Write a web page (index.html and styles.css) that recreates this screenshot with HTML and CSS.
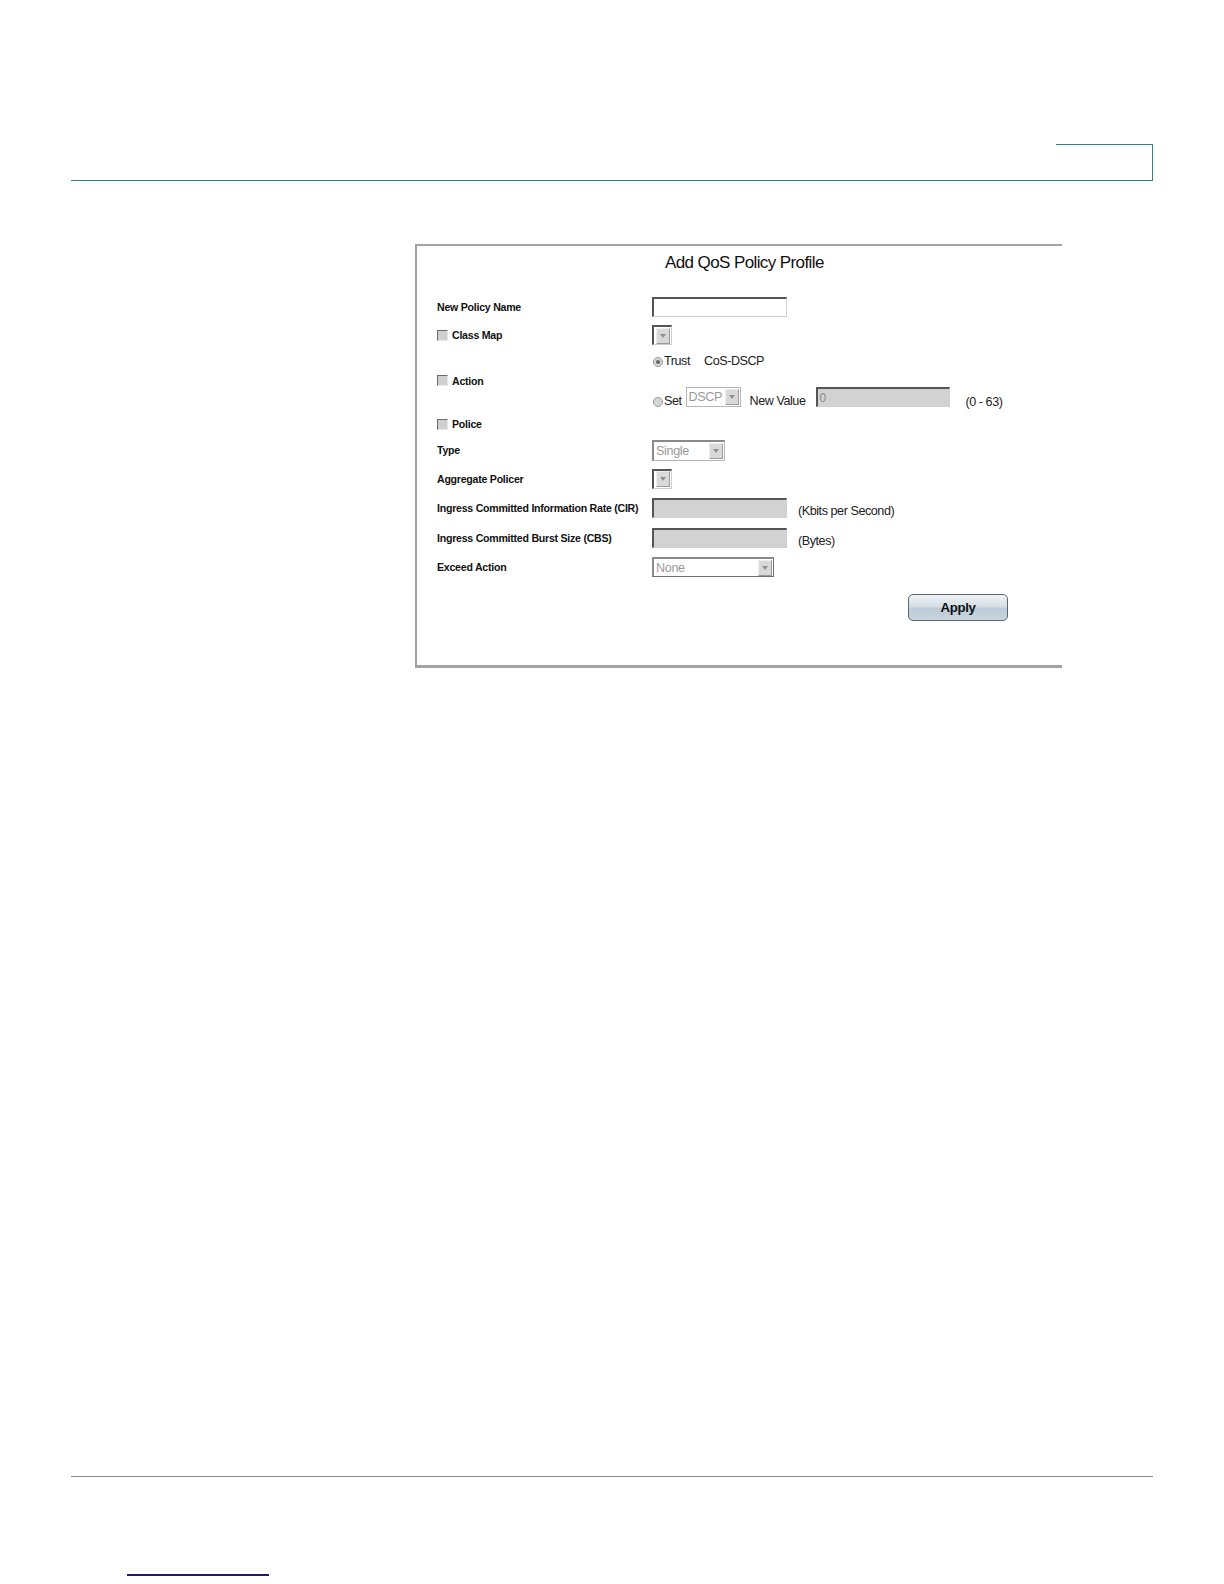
FILE: index.html
```html
<!DOCTYPE html>
<html>
<head>
<meta charset="utf-8">
<title>Add QoS Policy Profile</title>
<link rel="stylesheet" href="styles.css">
</head>
<body>
<div class="page">
  <div class="header"><div class="tab"></div></div>
  <div class="content">
    <div class="panel">
      <div class="title">Add QoS Policy Profile</div>
      <div class="form">
        <div class="row h28">
          <div class="label">New Policy Name</div>
          <div class="value"><span class="field white w135"></span></div>
        </div>
        <div class="row h28">
          <div class="label"><span class="check"></span>Class Map</div>
          <div class="value"><span class="select w20"><span class="btn"><span class="tri"></span></span></span></div>
        </div>
        <div class="row action">
          <div class="label"><span class="check"></span>Action</div>
          <div class="value stack">
            <div class="line trust"><span class="radio on"></span><span class="txt">Trust</span><span class="txt cos">CoS-DSCP</span></div>
            <div class="line set"><span class="radio"></span><span class="txt low">Set</span>
              <span class="select dis w55"><span class="seltext">DSCP</span><span class="btn"><span class="tri"></span></span></span>
              <span class="txt nv low">New Value</span>
              <span class="field gray w134"><span class="fieldtext">0</span></span>
              <span class="txt range">(0 - 63)</span>
            </div>
          </div>
        </div>
        <div class="row h24">
          <div class="label"><span class="check"></span>Police</div>
          <div class="value"></div>
        </div>
        <div class="row h28">
          <div class="label">Type</div>
          <div class="value"><span class="select dis w73 h21"><span class="seltext">Single</span><span class="btn"><span class="tri"></span></span></span></div>
        </div>
        <div class="row h29">
          <div class="label">Aggregate Policer</div>
          <div class="value"><span class="select w20"><span class="btn"><span class="tri"></span></span></span></div>
        </div>
        <div class="row h29">
          <div class="label">Ingress Committed Information Rate (CIR)</div>
          <div class="value"><span class="field gray w135"></span><span class="txt unit">(Kbits per Second)</span></div>
        </div>
        <div class="row h32">
          <div class="label">Ingress Committed Burst Size (CBS)</div>
          <div class="value"><span class="field gray w135"></span><span class="txt unit">(Bytes)</span></div>
        </div>
        <div class="row h26">
          <div class="label">Exceed Action</div>
          <div class="value"><span class="select dis w122 dark"><span class="seltext">None</span><span class="btn"><span class="tri"></span></span></span></div>
        </div>
      </div>
      <div class="actions"><button class="apply" type="button">Apply</button></div>
    </div>
  </div>
  <div class="footer"><span class="link"></span></div>
</div>
</body>
</html>
```

FILE: styles.css
```css
html, body {
  margin: 0;
  padding: 0;
  background: #ffffff;
  overflow: hidden;
}
.page {
  width: 1224px;
  height: 1584px;
  overflow: hidden;
  font-family: "Liberation Sans", Arial, sans-serif;
  color: #111;
}
.header {
  margin: 0 71px 0 71px;
  padding-top: 144px;
  border-bottom: 1px solid #3b7b84;
  display: flex;
  justify-content: flex-end;
}
.tab {
  width: 96px;
  height: 35px;
  border-top: 1px solid #3b7b84;
  border-right: 1px solid #3b7b84;
}
.content {
  height: 1295px;
  padding-top: 63px;
  box-sizing: border-box;
}
.panel {
  margin-left: 415px;
  width: 647px;
  height: 424px;
  box-sizing: border-box;
  border-left: 2px solid #a3a3a3;
  border-top: 2px solid #a3a3a3;
  border-bottom: 3px solid #a3a3a3;
}
.title {
  height: 34px;
  line-height: 34px;
  font-size: 17px;
  letter-spacing: -0.6px;
  padding-left: 248px;
  margin-bottom: 13px;
  color: #111;
}
.form {
  padding-left: 20px;
}
.row {
  display: grid;
  grid-template-columns: 215px 1fr;
  align-items: center;
}
.h24 { height: 24px; }
.h26 { height: 26px; }
.h28 { height: 28px; }
.h29 { height: 29px; }
.h32 { height: 32px; }
.action { height: 63px; }
.label {
  font-size: 10.6px;
  font-weight: bold;
  letter-spacing: -0.25px;
  display: flex;
  align-items: center;
  color: #111;
}
.value {
  display: flex;
  align-items: center;
}
.stack {
  flex-direction: column;
  align-items: flex-start;
  height: 63px;
}
.line {
  display: flex;
  align-items: center;
}
.trust { height: 23px; }
.set { height: 20px; margin-top: 15px; }
.txt {
  font-size: 12.6px;
  letter-spacing: -0.45px;
  color: #222;
}
.low { margin-top: 7px; }
.cos { margin-left: 14px; }
.nv { margin-left: 9px; margin-right: 11px; }
.range { margin-left: 15px; margin-top: 10px; }
.unit { margin-left: 11px; margin-top: 6px; }
.check {
  width: 9px;
  height: 9px;
  background: #cfcfcf;
  border-top: 1px solid #6a6a6a;
  border-left: 1px solid #6a6a6a;
  border-right: 1px solid #e6e6e6;
  border-bottom: 1px solid #e6e6e6;
  margin-right: 4px;
  flex: none;
}
.radio {
  width: 8px;
  height: 8px;
  border-radius: 50%;
  background: #d6d6d6;
  border: 1px solid #9a9a9a;
  margin-left: 1px;
  margin-right: 1px;
  margin-top: 3px;
  position: relative;
  flex: none;
}
.set .radio { margin-top: 9px; }
.radio.on::after {
  content: "";
  position: absolute;
  left: 2px;
  top: 2px;
  width: 4px;
  height: 4px;
  border-radius: 50%;
  background: #666;
}
.field {
  display: inline-flex;
  align-items: center;
  height: 20px;
  box-sizing: border-box;
  border-top: 2px solid #555;
  border-left: 2px solid #555;
  border-right: 1px solid #cfcfcf;
  border-bottom: 1px solid #cfcfcf;
  flex: none;
}
.field.white { background: #fff; }
.field.gray { background: #d2d2d2; }
.w135 { width: 135px; }
.w134 { width: 134px; }
.fieldtext {
  font-size: 12px;
  color: #8a8a8a;
  padding-left: 1px;
}
.select {
  display: inline-flex;
  align-items: center;
  justify-content: space-between;
  height: 20px;
  box-sizing: border-box;
  background: #fff;
  border-top: 2px solid #555;
  border-left: 2px solid #555;
  border-right: 1px solid #d0d0d0;
  border-bottom: 1px solid #d0d0d0;
  flex: none;
}
.select.h21 { height: 21px; }
.select.dis {
  border: 1px solid #b5b5b5;
  margin-left: 4px;
}
.value > .select.dis { margin-left: 0; border-top: 2px solid #8a8a8a; border-left: 2px solid #8a8a8a; }
.select.dark { border-color: #707070; border-top: 1px solid #707070; border-left: 1px solid #707070; }
.w20 { width: 20px; justify-content: flex-end; }
.w55 { width: 55px; }
.w73 { width: 73px; }
.w122 { width: 122px; }
.seltext {
  font-size: 12.6px;
  letter-spacing: -0.35px;
  color: #9a9a9a;
  padding-left: 2px;
}
.btn {
  width: 14px;
  height: 16px;
  background: #d9d9d9;
  border-left: 1px solid #eeeeee;
  border-top: 1px solid #eeeeee;
  border-right: 1px solid #9a9a9a;
  border-bottom: 1px solid #9a9a9a;
  box-sizing: border-box;
  display: flex;
  align-items: center;
  justify-content: center;
  margin-right: 1px;
}
.tri {
  width: 0;
  height: 0;
  border-left: 3px solid transparent;
  border-right: 3px solid transparent;
  border-top: 4px solid #8f8f8f;
}
.actions {
  display: flex;
  padding-left: 491px;
  margin-top: 14px;
}
.apply {
  width: 100px;
  height: 27px;
  border-radius: 5px;
  border: 1px solid #5a6670;
  background: linear-gradient(#eef2f5 0%, #d6e0e7 45%, #bccbd6 55%, #c8d5de 100%);
  font-family: "Liberation Sans", Arial, sans-serif;
  font-size: 13.2px;
  font-weight: bold;
  letter-spacing: -0.3px;
  color: #111;
  padding: 0;
}
.footer {
  margin: 0 71px 0 71px;
  border-top: 1px solid #8a8a8a;
  padding-top: 97px;
}
.link {
  display: block;
  margin-left: 56px;
  width: 142px;
  border-bottom: 2px solid #1c1c78;
}
```
